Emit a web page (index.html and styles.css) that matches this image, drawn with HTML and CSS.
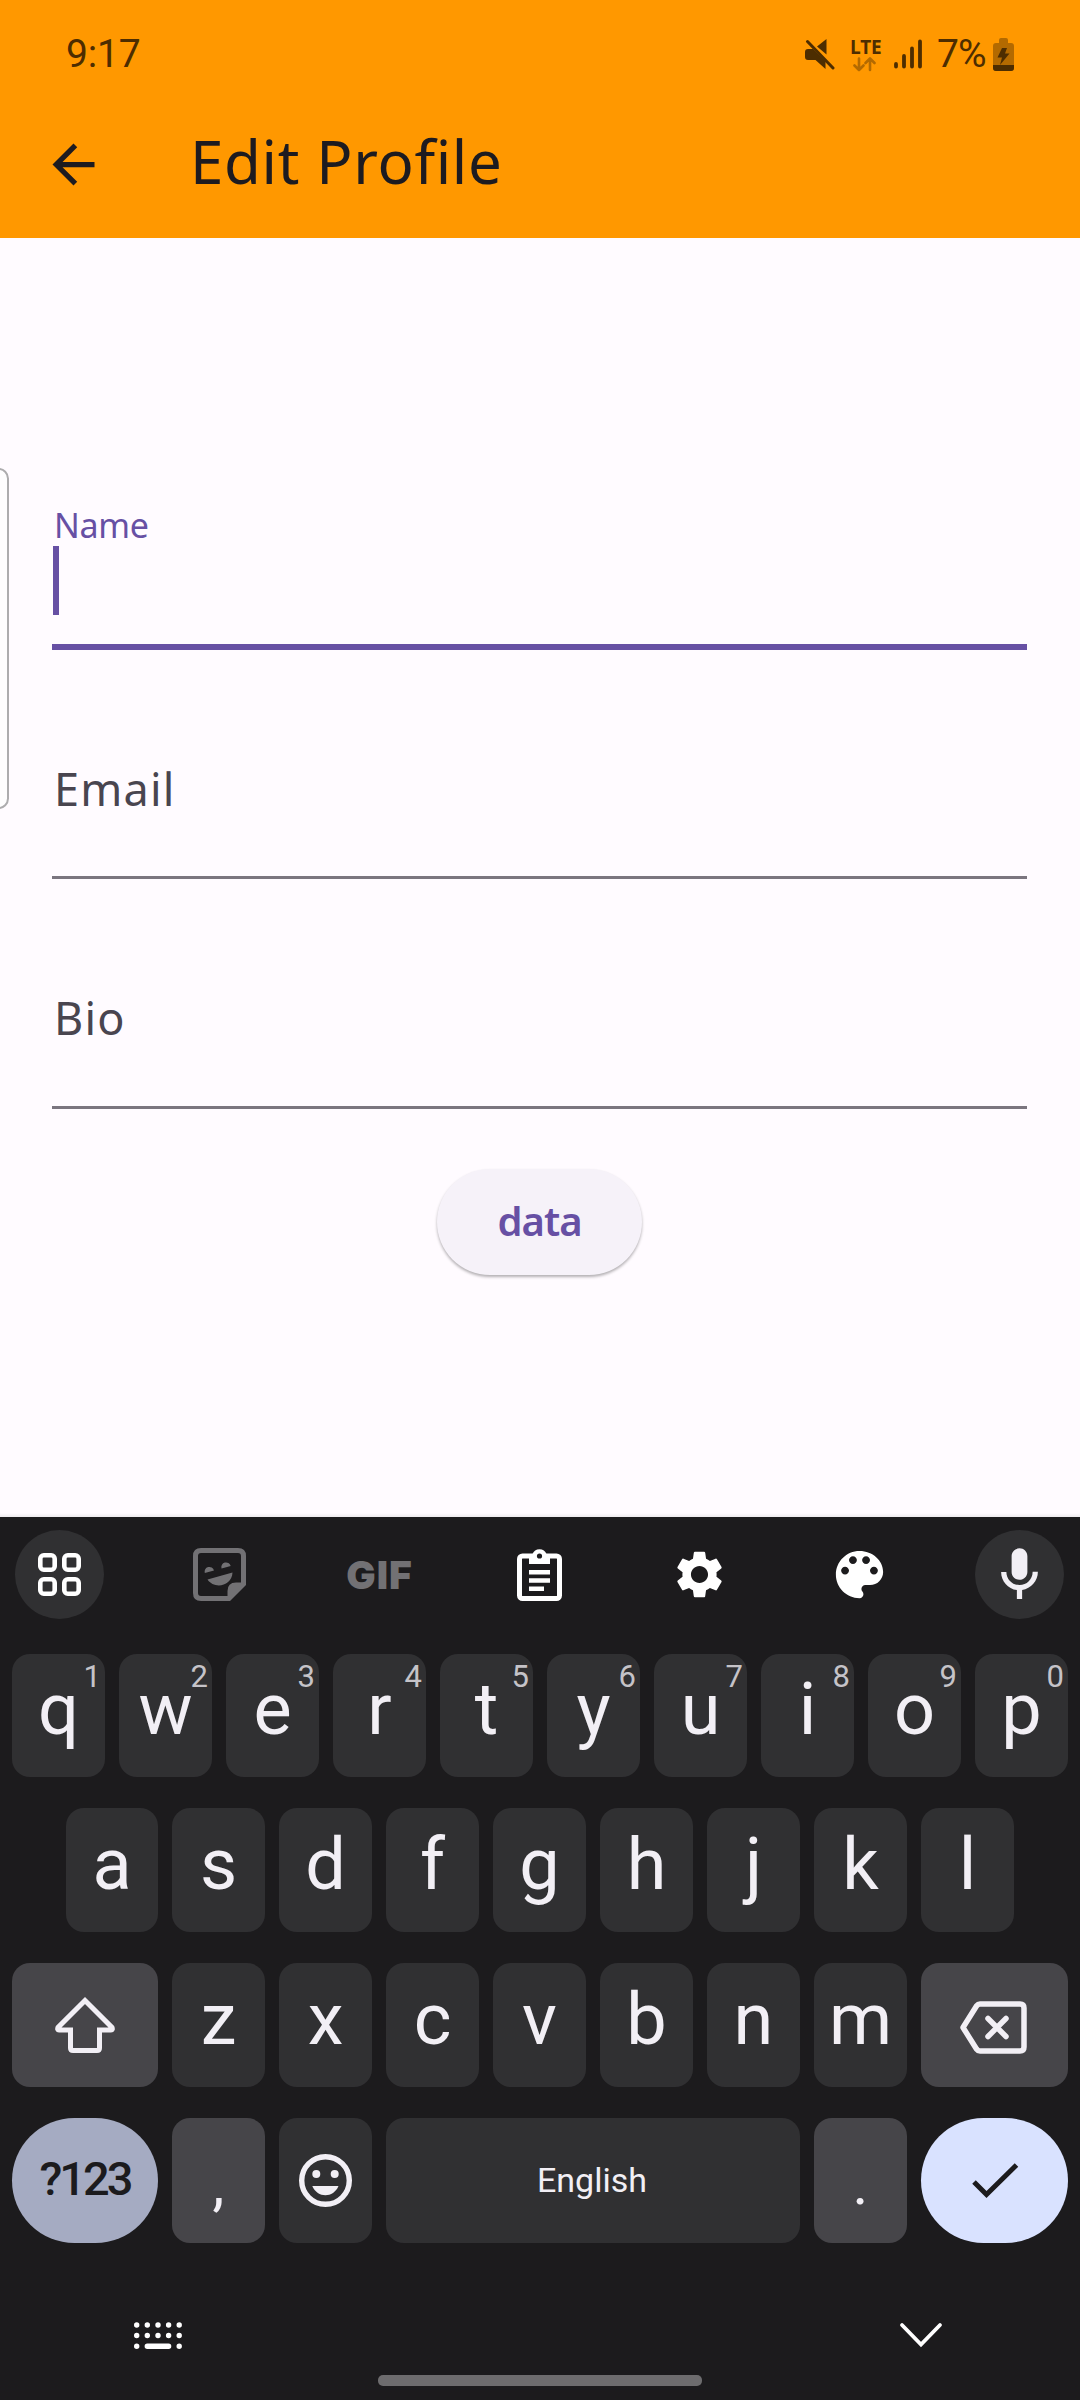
FILE: index.html
```html
<!DOCTYPE html>
<html lang="en">
<head>
<meta charset="utf-8">
<title>Edit Profile</title>
<link rel="stylesheet" href="styles.css">
</head>
<body>
<div class="screen">
  <header class="header">
    <div class="status">
      <span class="clock">9:17</span>
      <div class="status-icons">
        <svg class="mute" width="30" height="32" viewBox="0 0 30 32"><path d="M0 13q0-3 3-3h5L20.500 22.500V30L10.500 21H3q-3 0-3-3zM12 7.500L21.500 0v15.500z" fill="currentColor"/><path d="M2.500 2.500L28 29" stroke="currentColor" stroke-width="3" stroke-linecap="round"/></svg>
        <div class="lte"><span>LTE</span>
          <svg width="24" height="15" viewBox="0 0 24 15" fill="none" stroke="currentColor" stroke-width="2.600" stroke-linecap="round" stroke-linejoin="round"><path d="M6 1.500V13M1.500 8.500L6 13l4.500-4.500M17 13V1.500M12.500 6L17 1.500 21.500 6"/></svg>
        </div>
        <svg class="signal" width="28" height="30" viewBox="0 0 28 30" stroke="currentColor" stroke-width="3.800" stroke-linecap="round"><path d="M2 25v2.500M10 17v10.500M18 9.500v18M26 2.500v25"/></svg>
        <span class="percent">7%</span>
        <svg class="battery" width="21" height="33" viewBox="0 0 21 33"><path d="M6 4V2q0-2 2-2h5q2 0 2 2v3h3q3 0 3 3v22q0 3-3 3H3q-3 0-3-3V8q0-3 3-3h3z" fill="#b36a00"/><path d="M0 27h21v3q0 3-3 3H3q-3 0-3-3zM9 10h5l-2 5.500h4.500L7 27l2-7.500H4.500z" fill="currentColor"/></svg>
      </div>
    </div>
    <div class="appbar">
      <svg width="63" height="63" viewBox="0 0 24 24"><path fill="currentColor" d="M20 11H7.830l5.590-5.590L12 4l-8 8 8 8 1.410-1.410L7.830 13H20v-2z"/></svg>
      <h1>Edit Profile</h1>
    </div>
  </header>

  <main class="form">
    <div class="edge-panel"></div>
    <div class="field focused"><label>Name</label><div class="caret"></div></div>
    <div class="field"><label>Email</label></div>
    <div class="field"><label>Bio</label></div>
    <button class="submit">data</button>
  </main>

  <section class="keyboard">
    <div class="toolbar">
      <div class="tool round"><svg width="43" height="43" viewBox="0 0 43 43" fill="none" stroke="#fff" stroke-width="4.600"><rect x="2.300" y="2.300" width="14.400" height="14.400" rx="3.500"/><rect x="26.300" y="2.300" width="14.400" height="14.400" rx="3.500"/><rect x="2.300" y="26.300" width="14.400" height="14.400" rx="3.500"/><rect x="26.300" y="26.300" width="14.400" height="14.400" rx="3.500"/></svg></div>
      <div class="tool dim"><svg width="53" height="53" viewBox="0 0 53 53"><path d="M8 2.500h37q5.500 0 5.500 5.500v28L36 50.500H8Q2.500 50.500 2.500 45V8Q2.500 2.500 8 2.500z" fill="none" stroke="currentColor" stroke-width="5"/><path d="M34.500 51V43q0-8.500 8.500-8.500h9L37 52zM11.800 25a4.700 4.700 0 1 1 9.200-2.600zM28.500 20.500a4.700 4.700 0 1 1 9.200-2.600zM14.500 31.500L39.500 24.500c-.5 14-18.500 17-25 7z" fill="currentColor"/></svg></div>
      <div class="tool dim gif">GIF</div>
      <div class="tool"><svg width="45" height="53" viewBox="0 0 45 53"><rect x="2.500" y="8" width="40" height="42.500" rx="3" fill="none" stroke="#fff" stroke-width="5"/><path d="M12 6h3.500a7.500 7.500 0 0 1 14 0H33v10H12zM12 22h21v4.500H12zM12 30.300h21v4.500H12zM12 38.600h15v4.500H12z" fill="#fff"/><circle cx="22.500" cy="8" r="2.600" fill="#1c1b1d"/></svg></div>
      <div class="tool"><svg width="57" height="57" viewBox="0 0 24 24"><path fill="#fff" d="M19.140 12.940c.04-.3.06-.61.06-.94 0-.32-.02-.64-.07-.94l2.030-1.580c.18-.14.23-.41.12-.61l-1.920-3.320c-.12-.22-.37-.29-.59-.22l-2.390.96c-.5-.38-1.030-.7-1.620-.94l-.36-2.540c-.04-.24-.24-.41-.48-.41h-3.840c-.24 0-.43.17-.47.41l-.36 2.540c-.59.24-1.130.57-1.620.94l-2.390-.96c-.22-.08-.47 0-.59.22L2.740 8.870c-.12.21-.08.47.12.61l2.030 1.580c-.05.3-.09.63-.09.94s.02.64.07.94l-2.030 1.580c-.18.14-.23.41-.12.61l1.920 3.320c.12.22.37.29.59.22l2.390-.96c.5.38 1.030.7 1.620.94l.36 2.540c.05.24.24.41.48.41h3.840c.24 0 .44-.17.47-.41l.36-2.540c.59-.24 1.130-.56 1.620-.94l2.390.96c.22.08.47 0 .59-.22l1.920-3.320c.12-.22.07-.47-.12-.61l-2.010-1.580zM12 15.600c-1.980 0-3.600-1.620-3.600-3.600s1.620-3.600 3.600-3.600 3.600 1.620 3.600 3.600-1.620 3.600-3.600 3.600z"/></svg></div>
      <div class="tool"><svg width="63" height="63" viewBox="0 0 24 24"><path fill="#fff" d="M12 3c-4.970 0-9 4.030-9 9s4.030 9 9 9c.83 0 1.500-.67 1.500-1.500 0-.39-.15-.74-.39-1.010-.23-.26-.38-.61-.38-.99 0-.83.67-1.500 1.500-1.500H16c2.760 0 5-2.240 5-5 0-4.420-4.030-8-9-8zm-5.500 9c-.83 0-1.500-.67-1.500-1.500S5.670 9 6.500 9 8 9.670 8 10.500 7.330 12 6.500 12zm3-4C8.670 8 8 7.330 8 6.500S8.670 5 9.500 5s1.500.67 1.500 1.500S10.330 8 9.500 8zm5 0c-.83 0-1.500-.67-1.500-1.500S13.670 5 14.500 5s1.500.67 1.500 1.500S15.330 8 14.500 8zm3 4c-.83 0-1.500-.67-1.500-1.500S16.670 9 17.500 9s1.500.67 1.500 1.500-.67 1.500-1.500 1.500z"/></svg></div>
      <div class="tool round"><svg width="63" height="63" viewBox="0 0 24 24"><path fill="#f2eff5" d="M12 14c1.660 0 3-1.340 3-3V5c0-1.660-1.340-3-3-3S9 3.340 9 5v6c0 1.660 1.340 3 3 3zm5-3c0 2.760-2.240 5-5 5s-5-2.240-5-5H5c0 3.530 2.610 6.430 6 6.920V21.300h2v-3.380c3.390-.49 6-3.390 6-6.920h-2z"/></svg></div>
    </div>

    <div class="rows">
      <div class="row row1">
        <div class="key">q<sup>1</sup></div><div class="key">w<sup>2</sup></div><div class="key">e<sup>3</sup></div><div class="key">r<sup>4</sup></div><div class="key">t<sup>5</sup></div><div class="key">y<sup>6</sup></div><div class="key">u<sup>7</sup></div><div class="key">i<sup>8</sup></div><div class="key">o<sup>9</sup></div><div class="key">p<sup>0</sup></div>
      </div>
      <div class="row row2">
        <div class="key">a</div><div class="key">s</div><div class="key">d</div><div class="key">f</div><div class="key">g</div><div class="key">h</div><div class="key">j</div><div class="key">k</div><div class="key">l</div>
      </div>
      <div class="row row3">
        <div class="key wide alt"><svg width="60" height="58" viewBox="0 0 60 58" fill="none" stroke="#f2eff5" stroke-width="5"><path d="M30 4.500L3 31.500Q2 34 4 34H15.500V52q0 2.500 2.500 2.500H42q2.500 0 2.500-2.500V34H56q2 0 1-2.500z"/></svg></div>
        <div class="key">z</div><div class="key">x</div><div class="key">c</div><div class="key">v</div><div class="key">b</div><div class="key">n</div><div class="key">m</div>
        <div class="key wide alt"><svg class="backspace" width="67" height="53" viewBox="0 0 67 53" fill="none" stroke="#f2eff5" stroke-width="5.500" stroke-linejoin="round"><path d="M20 3H60Q64 3 64 7V46Q64 50 60 50H20Q18 50 16.500 48L3 26.500 16.500 5Q18 3 20 3z"/><path d="M28 17.500L46 35.500M46 17.500L28 35.500" stroke-linecap="round"/></svg></div>
      </div>
      <div class="row row4">
        <div class="key wide symbols">?123</div>
        <div class="key alt punct">,</div>
        <div class="key"><svg width="53" height="53" viewBox="0 0 53 53"><circle cx="26.500" cy="26.500" r="23.800" fill="none" stroke="#f2eff5" stroke-width="5.400"/><path d="M13.300 32h26.200c-5 12.300-21.200 12.300-26.200 0z" fill="#f2eff5"/><circle cx="17.300" cy="20" r="4" fill="#f2eff5"/><circle cx="35.700" cy="20" r="4" fill="#f2eff5"/></svg></div>
        <div class="key space">English</div>
        <div class="key alt punct">.</div>
        <div class="key wide enter"><svg width="50" height="38" viewBox="0 0 50 38" fill="none" stroke="#1c1b1d" stroke-width="5"><path d="M4 20L16.500 32.500 46.500 3"/></svg></div>
      </div>
    </div>

    <footer class="nav">
      <svg width="48" height="28" viewBox="0 0 48 28" fill="none" stroke="#fff" stroke-width="5.400" stroke-linecap="round"><path d="M2.700 3h.01M13.300 3h.01M24 3h.01M34.600 3h.01M45.200 3h.01M2.700 13.500h.01M13.300 13.500h.01M24 13.500h.01M34.600 13.500h.01M45.200 13.500h.01M2.700 24.200h.01M13.300 24.200h21.300M45.200 24.200h.01"/></svg>
      <svg width="44" height="26" viewBox="0 0 44 26" fill="none" stroke="#fff" stroke-width="3.800" stroke-linecap="round"><path d="M3 3L22 22.500 41 3"/></svg>
    </footer>
    <div class="home-bar"></div>
  </section>
</div>
</body>
</html>
```
FILE: styles.css
```css
* { box-sizing: border-box; }
body { margin: 0; }
svg { display: block; flex: none; }

.screen {
  width: 1080px;
  height: 2400px;
  display: flex;
  flex-direction: column;
  background: #fffbff;
  font-family: "Noto Sans", sans-serif;
  overflow: hidden;
}

/* Header */
.header { height: 238px; background: #ff9800; }
.status {
  height: 110px;
  padding: 0 66px 0 66px;
  display: flex;
  justify-content: space-between;
  color: #4d2d00;
  font: 39px/46px Roboto, sans-serif;
}
.clock { padding-top: 31px; letter-spacing: -0.2px; }
.status-icons { display: flex; align-items: flex-start; padding-top: 38px; }
.mute { margin-top: 1px; }
.lte { width: 32px; margin-left: 15px; font: 700 19px/14px "Open Sans", sans-serif; letter-spacing: -0.4px; padding-top: 2px; }
.lte span { display: block; }
.lte svg { color: #b36a00; margin: 3px 0 0 3px; }
.signal { margin: 1px 0 0 12px; }
.percent { margin: -7px 0 0 15px; width: 56px; letter-spacing: -0.8px; }
.appbar { display: flex; align-items: flex-start; padding: 23px 0 0 42px; color: #1d1b20; }
.appbar h1 { margin: -12px 0 0 85px; font-size: 60px; line-height: 80px; font-weight: 400; letter-spacing: 0.65px; }

/* Form */
.form {
  height: 1279px;
  position: relative;
  padding: 258px 53px 0 52px;
  display: flex;
  flex-direction: column;
  box-shadow: inset 0 -4px 3px -2px #eeebee;
}
.edge-panel {
  position: absolute;
  left: -12px;
  top: 230px;
  width: 21px;
  height: 341px;
  border: 2px solid #adacae;
  border-radius: 11px;
  background: #fefdfe;
}
.field { height: 230px; padding: 109px 2px 0; border-bottom: 3px solid #7b757f; color: #49454f; font-size: 45px; line-height: 60px; letter-spacing: 1.2px; }
.focused { height: 154px; padding: 11px 1px 0; border-bottom: 6px solid #6750a4; color: #6750a4; font-size: 34px; line-height: 36px; letter-spacing: -0.3px; }
.focused + .field { height: 229px; }
.focused label { display: block; padding-left: 1px; }
.caret { width: 6px; height: 69px; background: #6750a4; margin-top: 3px; }
.submit {
  align-self: center;
  margin-top: 60px;
  width: 205px;
  height: 106px;
  padding: 0 0 2px;
  border: 0;
  border-radius: 53px;
  background: #f6f2f9;
  color: #6750a4;
  font: 600 40px/52px "Noto Sans", sans-serif;
  letter-spacing: -1px;
  box-shadow: 0 2px 3px rgba(0, 0, 0, .3);
}

/* Keyboard */
.keyboard { height: 883px; background: #1c1b1d; }
.toolbar { height: 137px; padding: 13px 16px 0 15px; display: flex; justify-content: space-between; }
.tool { width: 89px; height: 89px; display: flex; align-items: center; justify-content: center; }
.round { border-radius: 50%; background: #303032; }
.dim { color: #727174; }
.gif { font: 900 39px/50px Inter, sans-serif; letter-spacing: 1px; }
.rows { display: flex; flex-direction: column; gap: 31px; padding: 0 12px; }
.row { display: flex; gap: 14px; height: 124px; }
.row1 { height: 123px; }
.row2 { padding: 0 54px; }
.row4 { height: 125px; }
.key {
  position: relative;
  width: 93px;
  flex: none;
  display: flex;
  align-items: center;
  justify-content: center;
  border-radius: 18px;
  background: #303032;
  color: #f2eff5;
  font: 72px/82px Roboto, sans-serif;
  padding-bottom: 11px;
}
.row2 .key:first-child { width: 92px; }
.key:has(svg) { padding: 0; }
.key sup { position: absolute; right: 4px; top: 7px; font-size: 31px; line-height: 32px; color: #c5c3c8; }
.wide { width: 146px; }
.wide:last-child { width: 147px; }
.alt { background: #464549; }
.backspace { margin: 4px 0 0 -2px; }
.key.symbols { border-radius: 63px; background: #a5abc2; color: #1c1b1d; font-size: 47px; font-weight: 500; letter-spacing: -3px; padding-bottom: 3px; }
.key.space { width: 414px; font-size: 34px; padding: 0 2px 2px 0; }
.key.punct { font-size: 60px; padding: 6px 0 0; }
.enter { border-radius: 63px; background: #d9e2ff; }
.nav { display: flex; justify-content: space-between; padding: 79px 137px 0 134px; }
.home-bar { width: 324px; height: 11px; margin: 25px auto 0; border-radius: 5px; background: #6d6c6e; }
```
